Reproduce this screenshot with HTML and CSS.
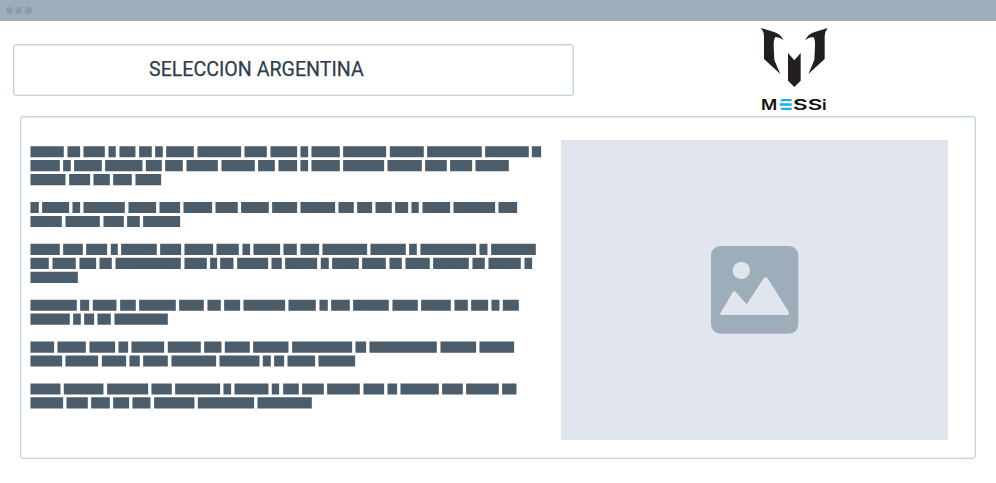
FILE: index.html
```html
<!DOCTYPE html>
<html lang="es">
<head>
<meta charset="utf-8">
<title>Seleccion Argentina</title>
<link rel="stylesheet" href="styles.css">
</head>
<body>
<div class="titlebar"><i class="dot"></i><i class="dot"></i><i class="dot"></i></div>
<header class="header">
  <div class="heading-box"><h1 class="heading">SELECCION ARGENTINA</h1></div>
  <svg class="logo" viewBox="0 0 330 282" role="img" aria-label="Messi">
    <g fill="#231f20">
      <path d="M63 24L102 36Q122 42 131 61Q119 51 106 51Q100 60 101 78L103 119Q111 140 121 162L72 117V49Q72 35 63 24Z"/>
      <path d="M263 24L224 36Q204 42 195 61Q207 51 220 51Q226 60 225 78L223 119Q215 140 205 162L254 117V49Q254 35 263 24Z"/>
      <path d="M144 99L163 121L182 99V182L163 201L144 182Z"/>
    </g>
    <g class="logo-text">
      <text transform="translate(63 270) scale(1.2 1)">M</text>
      <text transform="translate(159 270) scale(1.53 1)">S</text>
      <text transform="translate(203 270) scale(1.53 1)">S</text>
      <text transform="translate(246 270) scale(1.2 1)">i</text>
    </g>
    <path fill="#1cadea" d="M125 237H155V244H121Q122 238 125 237ZM119 250H155V257H119ZM121 263H155V270H126Q122 269 121 263Z"/>
  </svg>
</header>
<main class="panel">
  <svg class="copy" id="copy" viewBox="0 0 1560 810" aria-hidden="true"></svg>
  <div class="picture">
    <svg class="picture-icon" viewBox="0 0 264 264" aria-hidden="true">
      <rect width="262" height="263" rx="28" fill="#9eadba"/>
      <circle cx="91" cy="73" r="26" fill="#e1e5ed"/>
      <path d="M29 200L65 139Q70 133 75 139L107 175L158 97Q164 90 170 97L233 197Q237 206 229 207H32Q25 206 29 200Z" fill="#e1e5ed"/>
    </svg>
  </div>
</main>
<script src="copy.js"></script>
</body>
</html>
```
FILE: styles.css
```css
* { box-sizing: border-box; }
body {
  margin: 0;
  width: 996px;
  height: 483px;
  overflow: hidden;
  background: #fff;
  font-family: Roboto, "Liberation Sans", sans-serif;
}
.titlebar {
  display: flex;
  align-items: center;
  gap: 2.4px;
  height: 21px;
  padding-left: 5.8px;
  background: #9eadba;
}
.dot {
  width: 7px;
  height: 7px;
  border-radius: 50%;
  background: #8b9cab;
}
.header {
  display: flex;
  align-items: flex-start;
  height: 95px;
}
.heading-box {
  display: flex;
  align-items: center;
  width: 561px;
  height: 52px;
  margin: 23px 0 0 13px;
  padding: 0 0 2px 135px;
  border: 1px solid #c3d0de;
  border-radius: 3px;
  box-shadow: inset 0 0 0 1px #e9eef4;
}
.heading {
  margin: 0;
  color: #2e3e4e;
  font-size: 21px;
  font-weight: 400;
  line-height: 24px;
  white-space: nowrap;
  transform: scaleX(0.934);
  transform-origin: left;
  -webkit-text-stroke: 0.25px #2e3e4e;
}
.logo {
  width: 110px;
  height: 94px;
  margin: -1px 0 0 166px;
}
.logo-text {
  fill: #111;
  font-family: Inter, sans-serif;
  font-size: 44px;
  font-weight: 600;
}
.panel {
  display: flex;
  align-items: flex-start;
  justify-content: space-between;
  width: 956px;
  height: 343px;
  margin-left: 20px;
  padding: 23px 27px 0 9px;
  border: 1px solid #c3d0de;
  border-radius: 3px;
  box-shadow: inset 0 0 0 1px #e9eef4;
}
.copy {
  width: 520px;
  height: 270px;
  margin-top: 5px;
}
.picture {
  display: grid;
  place-items: center;
  width: 387px;
  height: 300px;
  background: #e1e5ed;
}
.picture-icon {
  width: 88px;
  height: 88px;
}
```
FILE: copy.js
```js
// Word blocks, one entry per line of copy; an empty line separates paragraphs.
const lines = `31-131,142-180,190-254,265-287,298-346,357-395,405-428,438-521,532-663,673-740,751-831,841-864,874-959,969-1098,1109-1211,1221-1385,1395-1526,1535-1563
31-119,129-152,162-245,255-367,377-425,435-488,499-593,604-704,714-764,775-831,841-864,874-959,969-1092,1102-1205,1215-1280,1290-1356,1366-1466
31-136,147-210,220-269,279-335,346-423

31-56,66-147,157-180,190-314,325-408,418-480,490-576,586-653,663-746,756-831,841-945,955-1001,1011-1056,1066-1115,1125-1164,1174-1196,1207-1290,1300-1425,1435-1491
31-125,136-239,250-311,321-359,369-480

31-119,129-188,198-261,272-293,303-410,420-483,493-579,589-656,667-690,700-780,790-830,841-897,907-1041,1051-1157,1167-1190,1201-1368,1378-1402,1413-1547
31-86,97-167,178-228,238-275,286-482,493-560,570-591,600-640,651-744,754-785,795-891,902-926,936-1016,1026-1097,1108-1145,1156-1229,1239-1346,1357-1394,1405-1502,1513-1536
31-173

31-170,180-207,218-289,300-347,357-467,477-551,562-602,612-660,670-795,805-887,898-923,933-989,999-1106,1117-1193,1203-1292,1303-1343,1353-1404,1414-1438,1448-1496
31-149,159-182,192-222,232-272,283-443

31-102,112-197,208-285,295-324,334-432,443-542,552-604,614-689,699-805,816-996,1006-1038,1048-1250,1261-1368,1378-1482
31-126,136-234,245-318,328-359,369-443,454-588,598-718,728-752,762-792,802-885,895-1005

31-121,131-250,261-384,394-455,465-600,610-633,643-745,755-777,789-836,846-911,921-1019,1030-1092,1102-1131,1141-1256,1266-1328,1338-1436,1446-1489
31-129,139-203,213-269,279-327,337-391,402-523,533-702,712-875`.split("\n");

const pitch = 41.87;
let d = "";
lines.forEach((line, row) => {
  if (!line) return;
  line.split(",").forEach((word) => {
    const [start, end] = word.split("-").map(Number);
    d += `M${start - 29.6} ${(3.4 + row * pitch).toFixed(2)}h${end - start}v33.4h${start - end}z`;
  });
});
const path = document.createElementNS("http://www.w3.org/2000/svg", "path");
path.setAttribute("d", d);
path.setAttribute("fill", "#4b5c6b");
document.getElementById("copy").append(path);
```
